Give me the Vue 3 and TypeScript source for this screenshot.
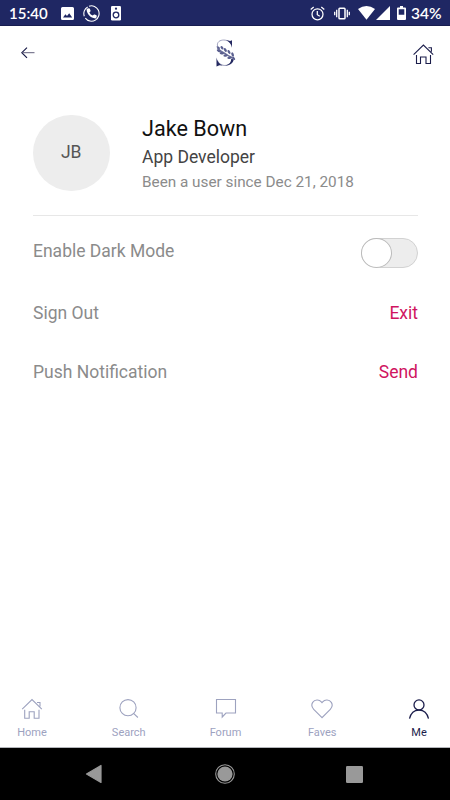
<script setup lang="ts">
import { ref } from 'vue'

interface Tab {
  id: string
  label: string
}

const tabs: Tab[] = [
  { id: 'home', label: 'Home' },
  { id: 'search', label: 'Search' },
  { id: 'forum', label: 'Forum' },
  { id: 'faves', label: 'Faves' },
  { id: 'me', label: 'Me' },
]

const activeTab = ref('me')
const darkMode = ref(false)
</script>

<template>
  <div class="screen">
    <header class="status">
      <span class="clock">15:40</span>
      <svg class="s-picture" width="13" height="13" viewBox="0 0 13 13">
        <path fill-rule="evenodd" fill="#fff" d="M1.5 0h10A1.5 1.5 0 0 1 13 1.5v10a1.5 1.5 0 0 1-1.500 1.500h-10A1.500 1.500 0 0 1 0 11.500v-10A1.500 1.500 0 0 1 1.500 0zM2 10.500h9.200L8.200 6.300 6 9.100 4.400 7.300z" />
      </svg>
      <svg class="s-phone" width="17" height="17" viewBox="0 0 17 17">
        <path d="M6 1.200A7.700 7.700 0 1 1 2.300 13.200M1.300 11.200A7.700 7.700 0 0 1 4.700 1.900" fill="none" stroke="#fff" stroke-width="1.100" />
        <path fill="#fff" d="M4.100 3.700l1.700-.5c.5-.1.8.1 1 .5l.7 1.700c.2.500.1.800-.2 1.100l-.9.9c.8 1.500 1.800 2.500 3.300 3.200l1-.9c.3-.3.7-.3 1.100-.2l1.600.8c.4.200.5.500.4 1l-.5 1.500c-.2.500-.5.600-1 .6C7.700 13.100 3.800 9.200 3.600 4.500c0-.4.100-.7.500-.8z" />
      </svg>
      <svg class="s-speaker" width="10" height="15" viewBox="0 0 10 15">
        <rect width="10" height="14.500" rx="1.200" fill="#fff" />
        <circle cx="5" cy="2.700" r="1.100" fill="#1f2763" />
        <circle cx="5" cy="9" r="2.800" fill="none" stroke="#1f2763" stroke-width="1.300" />
      </svg>
      <span class="grow"></span>
      <svg class="s-alarm" width="15" height="15" viewBox="0 0 15 15" fill="none" stroke="#fff" stroke-width="1.250">
        <circle cx="7.500" cy="8.300" r="5.500" />
        <path d="M7.300 5v3.700l2.500 1.500M.7 3.500l3-2.500M14.300 3.500l-3-2.500" />
      </svg>
      <svg class="s-vibrate" width="16" height="13" viewBox="0 0 16 13" fill="none" stroke="#fff">
        <rect x="5" y="1.200" width="6" height="10.600" rx=".8" stroke-width="1.500" />
        <path d="M2.700 2.800v7.400M13.300 2.800v7.400M.7 4.700v3.600M15.300 4.700v3.600" stroke-width="1.300" />
      </svg>
      <svg class="s-wifi" width="17" height="14" viewBox="0 0 17 14">
        <path d="M0 3Q8.500-3 17 3L8.500 13.800z" fill="#fff" />
      </svg>
      <svg class="s-signal" width="14" height="14" viewBox="0 0 14 14">
        <path d="M14 0v14H0z" fill="#fff" />
      </svg>
      <svg class="s-battery" width="9" height="14" viewBox="0 0 9 14">
        <path fill-rule="evenodd" fill="#fff" d="M3 0h3v1.500h2a1 1 0 0 1 1 1V13a1 1 0 0 1-1 1H1a1 1 0 0 1-1-1V2.500a1 1 0 0 1 1-1h2zM1.700 3.200v5.500h5.600v-5.500z" />
      </svg>
      <span class="percent">34%</span>
    </header>

    <nav class="toolbar">
      <button class="icon-btn" aria-label="Back">
        <svg width="14" height="12" viewBox="0 0 14 12" fill="none" stroke="#151845">
          <path d="M6 .7L.8 5.700 6 10.800" stroke-width="1.150" />
          <path d="M1 5.700h12.500" stroke="#625f7c" stroke-width="1" />
        </svg>
      </button>
      <svg class="logo" width="22" height="28" viewBox="0 0 22 28">
        <path d="M3.500 9.500C.9 7.700.7 4.400 2.900 2.500 5.500.4 10 .7 13 2.400" fill="none" stroke="#8b8eb0" stroke-width=".8" />
        <path d="M1.300 21.500C3 25 6.200 26.800 10 26.400c3.700-.4 6.800-2.800 7-6.500" fill="none" stroke="#777aa0" stroke-width=".8" />
        <path d="M9.800 1.100l4.300.9L16 1.200v7.500C15.200 5.200 13 2.400 9.800 1.100zM.5 18.500c.8 4.200 2.800 6.700 6 7.900l-3-.1L.5 27.500zM9.800 26.500c3.700-1.300 5.500-3.500 5.400-6.500l2.400.3c0 3.300-3 5.900-7.800 6.200z" fill="#242961" />
        <path d="M1.500 9c3 4 6.500 4.500 9 6.500s5 2.500 7.500 4.500" fill="none" stroke="#6d719a" stroke-width="1.500" />
        <g fill="#5a5f8f">
          <ellipse cx="2.300" cy="8.500" rx="2" ry=".9" transform="rotate(30 2.300 8.500)" />
          <ellipse cx="2.800" cy="11.800" rx="2.200" ry="1.200" transform="rotate(25 2.800 11.800)" />
          <ellipse cx="6" cy="8.800" rx="1.900" ry="1.200" transform="rotate(50 6 8.800)" />
          <ellipse cx="5.800" cy="14.300" rx="2.200" ry="1.200" transform="rotate(5 5.800 14.300)" />
          <ellipse cx="9.300" cy="11" rx="2.100" ry="1.200" transform="rotate(55 9.300 11)" />
          <ellipse cx="9.600" cy="16.500" rx="2.200" ry="1.200" transform="rotate(-5 9.600 16.500)" />
          <ellipse cx="13" cy="13" rx="2.200" ry="1.200" transform="rotate(60 13 13)" />
          <ellipse cx="13.600" cy="18.700" rx="2.300" ry="1.200" transform="rotate(-10 13.600 18.700)" />
          <ellipse cx="16.600" cy="15.500" rx="2.200" ry="1.200" transform="rotate(70 16.600 15.500)" />
          <ellipse cx="17.800" cy="19.300" rx="2" ry=".9" transform="rotate(55 17.800 19.300)" />
        </g>
      </svg>
      <button class="icon-btn" aria-label="Home">
        <svg class="home" width="21" height="21" viewBox="0 0 21 21" fill="none" stroke="#1b1d4b" stroke-width="1.100">
          <path d="M.6 10.700L10.400 1l9.800 9.700M15.400 3.800h3v4M3.500 11v8.500h4v-6.500h5.500v6.500h4.500V11" />
        </svg>
      </button>
    </nav>

    <main class="content">
      <section class="profile">
        <div class="avatar">JB</div>
        <div class="details">
          <h1>Jake Bown</h1>
          <p class="role">App Developer</p>
          <p class="since">Been a user since Dec 21, 2018</p>
        </div>
      </section>

      <div class="row row-mode">
        <span>Enable Dark Mode</span>
        <button
          class="switch"
          :class="{ on: darkMode }"
          role="switch"
          aria-label="Enable Dark Mode"
          :aria-checked="darkMode"
          @click="darkMode = !darkMode"
        >
          <span class="knob"></span>
        </button>
      </div>
      <div class="row row-exit">
        <span>Sign Out</span>
        <a class="action">Exit</a>
      </div>
      <div class="row row-send">
        <span>Push Notification</span>
        <a class="action">Send</a>
      </div>
    </main>

    <nav class="tabs">
      <button
        v-for="tab in tabs"
        :key="tab.id"
        class="tab"
        :class="{ active: tab.id === activeTab }"
        @click="activeTab = tab.id"
      >
        <svg width="22" height="22" viewBox="0 0 22 22" fill="none" stroke="currentColor" stroke-width="1.100">
          <path v-if="tab.id === 'home'" d="M1.200 11.200L11 1.500l9.800 9.700M16 4.500h3v4M3.700 11.700v8.500h4.500v-6.500h5v6.500h4.800v-8.500" />
          <template v-else-if="tab.id === 'search'">
            <circle cx="10" cy="9.700" r="8.100" />
            <path d="M15.500 15.300l4.400 4.200" />
          </template>
          <path v-else-if="tab.id === 'forum'" d="M1.500 1.500h19v13.500h-9.500l-3.800 4v-4H1.500z" />
          <path v-else-if="tab.id === 'faves'" d="M11 19.700L2.700 11.300C.7 9.200.4 6.500 1.700 4.400 3.700 1.500 8.100 1.200 10.300 3.800L11 4.600l.7-.8c2.200-2.600 6.600-2.300 8.600.6 1.300 2.100 1 4.800-1 6.900z" />
          <template v-else>
            <circle cx="11" cy="6.900" r="5" stroke-width="1.300" />
            <path d="M1.500 20.700C2.700 15.400 6.300 12.100 11 12.100s8.300 3.300 9.500 8.600" stroke-width="1.300" />
          </template>
        </svg>
        <span>{{ tab.label }}</span>
      </button>
    </nav>

    <footer class="system">
      <svg width="17" height="20" viewBox="0 0 17 20">
        <path d="M16 1.500v17L1.500 10z" fill="#999" stroke="#999" stroke-width="1.200" stroke-linejoin="round" />
      </svg>
      <svg class="sys-home" width="20" height="20" viewBox="0 0 20 20">
        <circle cx="10" cy="10" r="9.300" fill="none" stroke="#999" stroke-width="1.100" />
        <circle cx="10" cy="10" r="7.600" fill="#999" />
      </svg>
      <svg width="17" height="17" viewBox="0 0 17 17">
        <rect width="17" height="17" rx="1.200" fill="#999" />
      </svg>
    </footer>
  </div>
</template>

<style>
body {
  margin: 0;
  background: #fff;
}
</style>

<style scoped>
.screen {
  display: flex;
  flex-direction: column;
  width: 450px;
  height: 800px;
  background: #fff;
  font-family: Roboto, sans-serif;
  box-sizing: border-box;
  overflow: hidden;
}
svg {
  display: block;
  flex: none;
}
button {
  padding: 0;
  border: 0;
  background: none;
  font: inherit;
}
h1,
p {
  margin: 0;
}
.status {
  display: flex;
  align-items: center;
  height: 26px;
  box-sizing: border-box;
  border-bottom: 1px solid #171d50;
  padding: 1px 8px 0 9px;
  background: #1f2763;
  color: #fff;
  font-family: Lato, Roboto, sans-serif;
  font-size: 15.5px;
  font-weight: 600;
  line-height: 26px;
}
.clock {
  width: 52px;
  font-size: 15px;
}
.s-phone {
  margin-left: 9px;
}
.s-speaker {
  margin-left: 11px;
}
.grow {
  flex: 1;
}
.s-vibrate {
  margin-left: 9px;
}
.s-wifi {
  margin-left: 8px;
}
.s-signal {
  margin-left: 1px;
}
.s-battery {
  margin-left: 7px;
}
.percent {
  width: 31px;
  margin-left: 5px;
  white-space: nowrap;
}
.toolbar {
  display: flex;
  justify-content: space-between;
  align-items: center;
  height: 54px;
  padding: 0 16px 0 21px;
}
.logo {
  margin-left: 6px;
}
.home {
  margin-top: 2px;
}
.content {
  flex: 1;
  padding: 34px 32px 0 33px;
}
.profile {
  display: flex;
  gap: 32.5px;
  height: 101px;
  border-bottom: 1px solid #e7e7e7;
}
.avatar {
  width: 76.5px;
  height: 76.5px;
  margin-top: 0.5px;
  border-radius: 50%;
  background: #ededed;
  color: #555;
  font-size: 17.5px;
  line-height: 75px;
  text-align: center;
}
.details {
  white-space: nowrap;
}
h1 {
  color: #111;
  font-size: 21.6px;
  font-weight: 400;
  line-height: 30px;
}
.role {
  color: #444;
  font-size: 17.5px;
  line-height: 26px;
}
.since {
  color: #8b8b8b;
  font-size: 15.3px;
  line-height: 24px;
}
.row {
  display: flex;
  justify-content: space-between;
  align-items: center;
  color: #8b8b8b;
  font-size: 17.5px;
  line-height: 24px;
}
.row-mode {
  align-items: flex-start;
  height: 62px;
  padding-top: 23px;
  box-sizing: border-box;
}
.row-exit {
  height: 24px;
  margin-top: 23px;
}
.row-send {
  height: 24px;
  margin-top: 35px;
}
.action {
  color: #d0155f;
}
.switch {
  display: flex;
  width: 57px;
  height: 30px;
  margin-top: -1px;
  box-sizing: border-box;
  border: 1px solid #d2d2d2;
  border-radius: 15px;
  background: #ededed;
}
.switch.on {
  justify-content: flex-end;
  background: #d0155f;
}
.knob {
  width: 31px;
  height: 30px;
  margin: -1px;
  box-sizing: border-box;
  border: 1px solid #bbb;
  border-radius: 50%;
  background: #fff;
}
.tabs {
  display: flex;
  justify-content: space-between;
  height: 50px;
  margin-right: -1px;
  border-bottom: 1px solid #b3b5ba;
}
.tab {
  display: flex;
  flex-direction: column;
  align-items: center;
  width: 64px;
  color: #9da2bf;
  font-size: 11px;
  line-height: 14px;
}
.tab svg {
  margin-top: 1px;
}
.tab span {
  margin-top: 6px;
}
.tab.active {
  color: #1b1d4b;
}
.system {
  display: flex;
  justify-content: space-between;
  align-items: center;
  height: 52px;
  padding: 0 87px 0 85px;
  background: #000;
}
.sys-home {
  margin-left: 2px;
}
</style>
